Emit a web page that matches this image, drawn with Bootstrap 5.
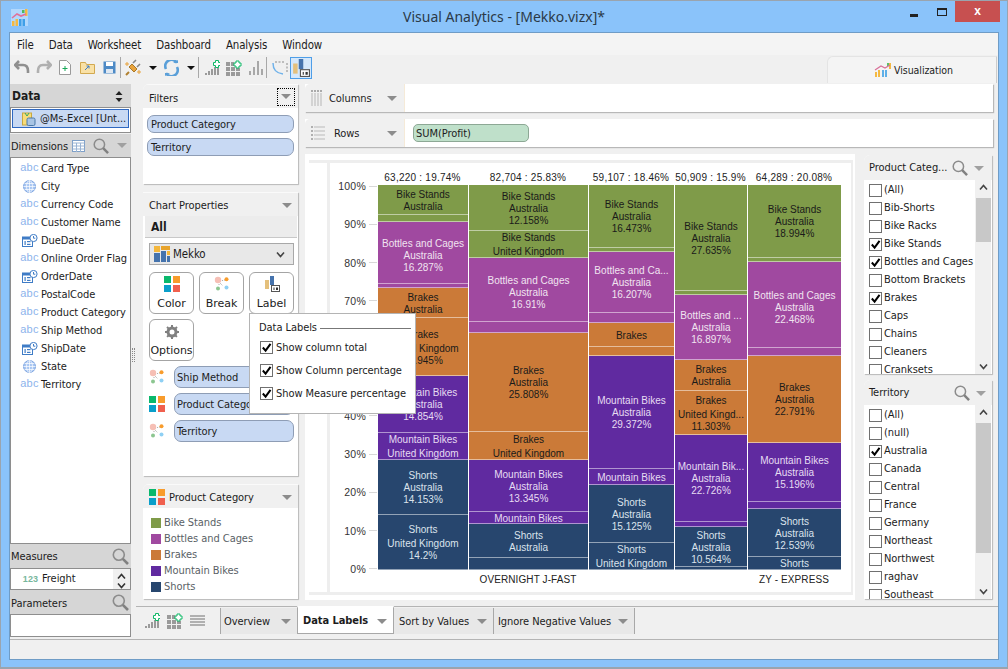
<!DOCTYPE html>
<html lang="en">
<head>
<meta charset="utf-8">
<title>Visual Analytics - [Mekko.vizx]*</title>
<link href="https://cdn.jsdelivr.net/npm/bootstrap@5.3.0/dist/css/bootstrap.min.css" rel="stylesheet">
<style>
html,body{height:669px;overflow:hidden;background:#8ac3fa}
body{font-family:"DejaVu Sans","Liberation Sans",sans-serif;font-stretch:condensed;font-size:11px;letter-spacing:-.06px;color:#1c1c1c;line-height:18px}
label,.drow,.vtab,.fhd,.lrow,.phd{white-space:nowrap}
.win{width:1008px;height:669px;border:1px solid #9aa4ae;border-bottom-width:2px}
.ttl{height:31px;flex:none}
.ttl-text{font-family:"Noto Sans",sans-serif;font-stretch:normal;font-size:14px;letter-spacing:0;color:#2b3a48;left:0;right:0;top:7px;line-height:18px}
.app-ic{margin-left:10px}
.wbtns{top:0;right:7px;height:21px}
.wb-min{width:8px;height:3px;background:#222;margin:13px 19px 0 0}
.wb-max{width:10px;height:8px;border:1px solid #222;border-top-width:2px;margin:7px 8px 0 0}
.wb-close{width:45px;height:21px;background:#c75050;color:#fff;font:bold 12px/20px "Liberation Sans",sans-serif}
.client{width:990px;height:628px;margin-left:8px;border:1px solid #6f9cc6;background:#f0f0f0;flex:none}
.menu{height:22px;background:#f4f4f4;padding-left:7px;padding-top:2px;gap:15px;flex:none;font-size:11.4px;letter-spacing:-.1px}
.tbar{height:29px;flex:none;padding-left:4px;padding-bottom:4px;background:#f0f0f0}
.tbar>*{flex-shrink:0}
.ml2{margin-left:2px}.ml3{margin-left:3px}.ml4{margin-left:4px}.ml5{margin-left:5px}.ml6{margin-left:6px}.ml7{margin-left:7px}.ml8{margin-left:8px}.ml9{margin-left:9px}
.tb-sep{width:1px;height:21px;background:#a8a8a8}
.tb-act{width:22px;height:22px;background:#d5e8fb;border:1px solid #4e9ee8}
.vz-tab{width:170px;height:27px;margin-left:auto;margin-right:1px;margin-top:1px;background:#f4f4f4;border:1px solid #e4e4e4;border-bottom:0;border-right-color:#ccc;border-top-left-radius:6px;font-size:10.5px;gap:2px;padding-left:3px}
.lcol{width:121px;flex:none;height:555px}
.hd-grey{background:#d6d6d6;padding-left:1px;padding-right:2px}
.lst{background:#fff;border:1px solid #8e8e8e}
.hd-data{height:23px;font-weight:700;font-size:12px;padding:1px 8px 0 2px}
.src{height:26px;padding:1px;background:#fff;border:1px solid #8e8e8e}
.src-in{height:19px;background:#c8d9f3;border:1px solid #2f68c0;padding-left:9px;gap:4px;width:100%;overflow:hidden}
.hd-dim{height:23px;flex:none;margin-top:1px;padding-top:2px}
.hd-dim svg,.hd-dim .tri{margin-top:-2px}
.dims{height:387px;padding-top:1px}
.drow{height:18px;padding:1px 0 0 10px;flex:none}
.ic-slot{width:17px;margin-right:3px;flex:none;display:flex;justify-content:center}
.abc{color:#8db4ec;font-family:"Liberation Sans",sans-serif;font-stretch:normal;font-size:11px;letter-spacing:.3px;line-height:14px;margin-top:-3px}
.n123{color:#78b79c;font-family:"Liberation Sans",sans-serif;font-stretch:normal;font-size:9px;font-weight:700;letter-spacing:.2px}
.hd-sm{height:24px;flex:none;padding-top:2px}
.hd-par{padding-top:3px}
.hd-sm svg{margin-top:-2px}
.meas{height:22px;position:relative;flex:none}
.meas-r{height:20px;padding-left:11px}
.sb-mini{width:17px;margin-left:auto;background:#f0f0f0;height:20px;flex-direction:column;display:flex;align-items:center;justify-content:space-between}
.par{height:23px;flex:none}
.gut{width:12px;flex:none;padding-top:20px}
.dots{width:3px;height:14px;border-left:1px dotted #888;border-right:1px dotted #888;margin-left:1px}
.mcol{width:155px;flex:none;gap:8px;height:515px}
.pbox{background:#fff;box-shadow:1px 1px 1px #b8b8b8;border-top-left-radius:6px;overflow:hidden}
.pbox-v{overflow:visible}
.phd{height:24px;background:#f0f0f0;border-top:1px solid #fafafa;padding:2px 6px 0;flex:none}
.flt{height:100px;flex:none}
.flt .phd{padding-top:4px}
.flt .phd .dotbtn{margin-top:-4px}
.flt-b{gap:5px;padding:7px 4px 0}
.dotbtn{width:18px;height:18px;border:1px dotted #000;margin-right:-3px}
.fpill{height:18px;background:#c8d9f3;border:1px solid #8e9db5;border-radius:7px;padding-left:3px;line-height:18px;white-space:nowrap;overflow:hidden}
.cp{height:284px;flex:none}
.allr{height:22px;background:#ececec;border-bottom:1px solid #c8c8c8;font-weight:700;font-size:12px;padding-left:6px;margin-left:2px;margin-right:1px}
.msel{height:22px;background:#e8e8e8;border:1px solid #a8a8a8;margin:5px 4px 0 6px;padding:0 4px;gap:3px;font-size:11.4px}
.pbtn{width:45px;height:42px;border:1px solid #a4a4a4;border-radius:6px;background:#fff;padding:3px 0 0;font-size:11px;line-height:16px;color:#1c1c1c;gap:4px;letter-spacing:-.06px}
.pbtn:hover{background:#fff;border-color:#a4a4a4;color:#1c1c1c}
.gear{margin-top:2px}
.btnrow{gap:5px;margin:7px 0 0 6px}
.btnrow2{margin-top:5px}
.prow{height:22px;margin:5px 4px 0 6px}
.prow .ic-box{width:25px;flex:none}
.prow .fpill{flex:1;height:22px;line-height:22px;padding-left:2px;min-width:0}
.leg{height:115px;flex:none}
.leg .phd{gap:4px}
.leg .phd svg{margin-top:-2px}
.leg-b{padding-top:7px}
.lrow{height:16px;padding-left:8px;color:#5a5f66;gap:3px}
.swb{width:10px;height:10px;flex:none}
.ctr{width:688px;flex:none;margin-left:7px;height:516px}
.shelf{height:28px;flex:none;background:#fff;box-shadow:1px 1px 1px #b8b8b8}
.shelf-r{margin-top:7px}
.shelf-h{width:100px;height:28px;background:#f0f0f0;border-right:1px solid #f5ead8;padding-left:6px;padding-top:2px;gap:6px;flex:none;border-top-left-radius:5px}
.shelf-h svg,.shelf-h .tri{margin-top:-2px}
.shelf-h .tri{margin-left:auto;margin-right:7px}
.rws{margin-left:3px}
.sumpill{width:116px;height:18px;margin-left:8px;background:#bfe0ca;border:1px solid #8da895;border-radius:5px;line-height:18px;padding-left:2px}
.lower{margin-top:7px}
.cvs{width:550px;height:446px;background:#fff;flex:none;padding:6px 3px 0 4px}
.frm{width:544px;height:435px;border:3px solid #eee;border-width:3px 2px 3px 0}
.frm-l{width:21px;border-right:3px solid #eee;flex:none}
.mk{font-family:"Liberation Sans",sans-serif;font-stretch:normal;font-size:10px;letter-spacing:.24px;line-height:12px;padding-top:8px}
.tots{padding:1px 0 0 47px;height:12px;margin-bottom:2px;color:#222}
.xlabs{padding-left:47px;height:12px;margin-top:4px;letter-spacing:.1px;color:#222}
.cl{flex:none;text-align:center;white-space:nowrap}
.plotw{height:385px}
.axis{width:47px;flex:none;height:385px;justify-content:space-between;color:#333;font-size:10.5px}
.tk{height:2px;flex:none;align-items:center;justify-content:flex-end}
.tk i{display:block;width:8px;height:1px;background:#d8d8d8;margin-left:3px}
.mcl{flex:none;border-left:1px solid rgba(255,255,255,.45);height:385px;letter-spacing:.02px}
.sg{overflow:hidden;border-bottom:1px solid rgba(255,255,255,.5);text-align:center;white-space:nowrap;flex:none;justify-content:center;display:flex;flex-direction:column;padding-top:2px}
.sg div{flex:none}
.sg-dn{padding-top:6px}
.uk{margin-top:2px}
.c1{background:#7f9b49;color:#1a1a1a}.c2{background:#a049a0;color:#f0e4f0}.c3{background:#cb7a38;color:#1a1a1a}.c4{background:#602aa0;color:#e6dcf2}.c5{background:#27466e;color:#dbe3ec}
.rcol{width:128px;flex:none;margin-left:9px;padding-top:1px;gap:6px}
.fbox{height:219px;flex:none;position:relative}
.fhd{height:25px;background:#f0f0f0;padding:1px 6px 0 5px;flex:none;gap:2px}
.mag-p{margin-left:3px}
.flist{height:194px;overflow:hidden;flex:1;min-width:0;padding:1px 0 0 5px}
.frow{height:18px;flex:none;gap:2px}
.form-check-input.ck{width:13px;height:13px;margin:0;border:1px solid #707070;border-radius:0;background-color:#fff;box-shadow:none;flex:none;float:none}
.form-check-input.ck:checked{background-color:#fff;border-color:#707070;background-size:11px;background-image:url("data:image/svg+xml,%3csvg xmlns='http://www.w3.org/2000/svg' viewBox='0 0 12 12'%3e%3cpath fill='none' stroke='%23000' stroke-width='2.2' d='M2 6l3 3.4L10.4 2'/%3e%3c/svg%3e")}
.vsb{width:16px;flex:none;background:#f0f0f0;height:194px;align-items:center;margin-right:1px}
.vsb-th{width:15px;background:#c8c8c8;margin-top:7px}
.vsb-tr{flex:1}
.btm{height:33px;flex:none;border-top:1px solid #b4b4b4;margin-left:5px;padding-left:8px}
.btm-ic{gap:7px;width:76px;flex:none;height:26px;margin-top:1px}
.vtab{height:26px;border-left:1px solid #a8a8a8;background:#e8e8e8;padding:1px 6px 0 3px;margin-top:1px;flex:none}
.vtab .tri{margin-left:auto}
.vtab-on{background:#fff;border:1px solid #a8a8a8;border-top:2px solid #fff;height:28px;margin-top:-1px;font-weight:700;padding-left:5px;margin-right:-1px;position:relative}
.vt-s{padding-left:5px}
.vt-i{padding-left:4px;border-right:1px solid #a8a8a8}
.status{height:20px;flex:none;border-top:1px solid #b4b4b4;background:#f0f0f0}
.tri{display:inline-block;width:0;height:0;border-left:5px solid transparent;border-right:5px solid transparent;border-top:5px solid #8c8c8c;flex:none}
.tri-k{border-left-width:4px;border-right-width:4px;border-top:4px solid #111}
.tri-l{border-top-color:#a0a0a0}
.pop{left:239px;top:229px;width:167px;height:101px;background:#fff;border:1px solid #b4b4b4;padding:5px 4px 0 9px;z-index:5;line-height:18px}
.pop-h{gap:3px;height:18px;margin-bottom:-1px}
.pop-h span{flex:none}
.pop-h i{flex:1;height:1px;background:#777;display:block}
.pop-r{height:23px;gap:3px;padding-left:1px}
</style>
</head>
<body>
<svg class="d-none" xmlns="http://www.w3.org/2000/svg">
<symbol id="s-grid" viewBox="0 0 16 16"><rect width="7" height="7" fill="#0ab86c"/><rect x="9" width="7" height="7" fill="#f89c2c"/><rect y="9" width="7" height="7" fill="#0a9fca"/><rect x="9" y="9" width="7" height="7" fill="#f0604e"/></symbol>
<symbol id="s-break" viewBox="0 0 16 16"><path d="M6 5l5-1M6 7l3 3M5 8v2" stroke="#aaa" stroke-dasharray="1 1" fill="none"/><circle cx="4" cy="4" r="3.2" fill="#f6bfb5"/><circle cx="12.5" cy="3.2" r="2" fill="#f89c2c"/><circle cx="4" cy="12.5" r="2" fill="#8cc690"/><circle cx="12.5" cy="11.5" r="2" fill="#8fd0f4"/></symbol>
<symbol id="s-label" viewBox="0 0 16 16"><rect x="1" y="4" width="4" height="9" fill="#e4c07c"/><rect x="6" y="0" width="4" height="9" fill="#4573ad"/><rect x="7.5" y="9.5" width="8" height="6" fill="#fff" stroke="#555"/><rect x="9.5" y="11.5" width="1" height="2.5" fill="#333"/><rect x="12" y="11.5" width="2" height="2.5" fill="#333"/></symbol>
<symbol id="s-mag" viewBox="0 0 17 17"><circle cx="6.8" cy="6.8" r="5.5" fill="none" stroke="#8c8c8c" stroke-width="1.6"/><path d="M10.8 10.8L16 16" stroke="#808080" stroke-width="2.6"/></symbol>
<symbol id="s-globe" viewBox="0 0 13 13"><circle cx="6.5" cy="6.5" r="6" fill="#a8c6f2" stroke="#7fa6e0"/><path d="M.5 6.5h12M1.5 3.5h10M1.5 9.5h10M6.5.5v12" stroke="#fff" stroke-width=".7"/><ellipse cx="6.5" cy="6.5" rx="3" ry="6" fill="none" stroke="#fff" stroke-width=".7"/></symbol>
<symbol id="s-date" viewBox="0 0 16 13"><rect x=".5" y="3" width="10" height="9.5" fill="#fff" stroke="#3f7cc6"/><rect x=".5" y="3" width="10" height="2.5" fill="#3f7cc6"/><rect x="2.5" y="7" width="1.2" height="4" fill="#3f7cc6"/><rect x="5" y="7" width="3.5" height="1.2" fill="#3f7cc6"/><rect x="5" y="9.8" width="3.5" height="1.2" fill="#3f7cc6"/><circle cx="11.5" cy="4" r="3.6" fill="#fff" stroke="#3f7cc6"/><path d="M11.5 2v2.2h1.8" stroke="#3f7cc6" fill="none"/></symbol>
<symbol id="s-barplus" viewBox="0 0 16 16"><path d="M1 13h2v2H1zM4 11h2v4H4zM7 9h2v6H7zM10 7h2v8h-2zM13 7h2v8h-2z" fill="#9a9a9a"/><path d="M9.5 2.5h2v-2h3v2h2v3h-2v2h-3v-2h-2z" fill="#fff" stroke="#0fb866"/></symbol>
<symbol id="s-gridplus" viewBox="0 0 16 16"><path d="M0 2h4v4H0zM5 2h3v4H5zM0 7h4v4H0zM5 7h4v4H5zM10 8h4v3h-4zM0 12h4v4H0zM5 12h4v4H5zM10 12h4v4h-4z" fill="#9a9a9a"/><path d="M8 3h2V1h3v2h2v3h-2v2h-3V6H8z" fill="#fff" stroke="#0fb866"/></symbol>
<symbol id="s-lines" viewBox="0 0 15 12"><path d="M0 1h15M0 4h15M0 7h15M0 10h15" stroke="#9a9a9a" stroke-width="1.6"/></symbol>
</svg>
<div class="win d-flex flex-column">
  <header class="ttl position-relative">
    <svg class="app-ic mt-2" width="17" height="17" viewBox="0 0 17 17"><rect width="17" height="17" fill="#fff" opacity=".35"/><rect x="1" y="12" width="2.5" height="5" fill="#f4b942"/><rect x="4.5" y="10" width="2.5" height="7" fill="#f4b942"/><rect x="8" y="10" width="2.5" height="7" fill="#3f9fe8"/><rect x="11.5" y="10" width="2.5" height="7" fill="#3f9fe8"/><rect x="11" y="1" width="2.5" height="3" fill="#4fb85e"/><rect x="14" y="0" width="2.5" height="7" fill="#f4b942"/><path d="M1 9l5-4 4 2 5-2" stroke="#e0709a" stroke-width="1.6" fill="none"/></svg>
    <div class="ttl-text position-absolute text-center">Visual Analytics - [Mekko.vizx]*</div>
    <div class="wbtns position-absolute d-flex">
      <div class="wb-min"></div><div class="wb-max"></div>
      <div class="wb-close text-center">x</div>
    </div>
  </header>
  <div class="client d-flex flex-column">
    <nav class="menu d-flex align-items-center"><span>File</span><span>Data</span><span>Worksheet</span><span>Dashboard</span><span>Analysis</span><span>Window</span></nav>
    <div class="tbar d-flex align-items-center">
      <svg width="16" height="15" viewBox="0 0 16 15"><path d="M5 1L1 5l4 4M1 5h8c4 0 5 3 5 6v2" fill="none" stroke="#8f8f8f" stroke-width="2.6"/></svg>
      <svg class="ml6" width="16" height="15" viewBox="0 0 16 15"><path d="M11 1l4 4-4 4M15 5H7C3 5 2 8 2 11v2" fill="none" stroke="#b0b0b0" stroke-width="2.6"/></svg>
      <svg class="ml7" width="12" height="15" viewBox="0 0 12 15"><path d="M.5.5h7l4 4v10H.5z" fill="#fff" stroke="#9a9a9a"/><path d="M3.5 8.5h5M6 6v5" stroke="#18a858"/></svg>
      <svg class="ml9" width="15" height="13" viewBox="0 0 15 13"><path d="M.5 1.5h5l1 2h8v9H.5z" fill="#f9e1a6" stroke="#d2a950"/><path d="M5 9l4-4M6.5 5H9v2.5" stroke="#3f7cc6" fill="none"/></svg>
      <svg class="ml8" width="13" height="13" viewBox="0 0 13 13"><path d="M.5.5h12v12H.5z" fill="#4d8ac6"/><rect x="3" y="1" width="7" height="4" fill="#fff"/><rect x="3" y="8" width="7" height="4" fill="#dfe8f2"/></svg>
      <div class="tb-sep ml4"></div>
      <svg class="ml4" width="17" height="17" viewBox="0 0 17 17"><path d="M1 16l3-3" stroke="#b08030" stroke-width="2"/><path d="M4 8l5 5 3-3-5-5z" fill="#e8a33c" stroke="#a87828"/><path d="M8 4l3-3M12 8l3-3" stroke="#888" stroke-width="1.6"/><path d="M2 3v4M0 5h4M14 11v4M12 13h4" stroke="#e8a33c"/></svg>
      <span class="tri tri-k ml7"></span>
      <svg class="ml7" width="15" height="16" viewBox="0 0 15 16"><path d="M13 3A6 6 0 0 0 2 9M2 13a6 6 0 0 0 11-6" fill="none" stroke="#5a9fd8" stroke-width="2.6"/><path d="M9 3h5V0zM6 13H1v3z" fill="#5a9fd8"/></svg>
      <span class="tri tri-k ml8"></span>
      <div class="tb-sep ml3"></div>
      <svg class="ml5" width="16" height="16"><use href="#s-barplus"/></svg>
      <svg class="ml6" width="16" height="16"><use href="#s-gridplus"/></svg>
      <svg class="ml6" width="15" height="15" viewBox="0 0 15 15"><path d="M1 11h2v4H1zM5 7h2v8H5zM9 1h2v14H9zM13 9h2v6h-2z" fill="#a8a8a8"/></svg>
      <div class="tb-sep ml3"></div>
      <svg class="ml5" width="16" height="15" viewBox="0 0 16 15"><path d="M1 3c0 7 3 10 10 11" fill="none" stroke="#6fb2ea" stroke-width="1.5"/><path d="M3 2h10M15 3v9" stroke="#8a8a8a" stroke-dasharray="2 1.5"/></svg>
      <div class="tb-act ml2 d-flex align-items-center justify-content-center"><svg width="18" height="18"><use href="#s-label"/></svg></div>
      <div class="vz-tab d-flex align-items-center justify-content-center align-self-start">
        <svg width="18" height="16" viewBox="0 0 18 16"><rect x="1" y="10" width="2" height="5" fill="#f4b942"/><rect x="4" y="8" width="2" height="7" fill="#f4b942"/><rect x="8" y="8" width="2" height="7" fill="#5fb0e8"/><rect x="11" y="8" width="2" height="7" fill="#5fb0e8"/><rect x="13" y="1" width="2" height="3" fill="#5bbf6a"/><rect x="15" y="1" width="2" height="6" fill="#f4b942"/><path d="M1 8l6-4 4 2 5-3" stroke="#d87098" fill="none" stroke-width="1.2"/></svg>
        <span>Visualization</span>
      </div>
    </div>
    <div class="d-flex flex-grow-1 position-relative">
      <aside class="lcol d-flex flex-column">
        <div class="hd-grey hd-data d-flex align-items-center justify-content-between"><span>Data</span><svg width="8" height="11" viewBox="0 0 8 11"><path d="M4 0l3.5 4h-7zM4 11L.5 7h7z" fill="#222"/></svg></div>
        <div class="src d-flex"><div class="src-in d-flex align-items-center">
          <svg width="14" height="14" viewBox="0 0 14 14" class="flex-shrink-0"><rect x=".5" y="1" width="9" height="12" fill="#f8dc78" stroke="#c8a840"/><rect x="5" y="6" width="8" height="7.5" rx="1.5" fill="#a8c4e4" stroke="#4a78a8"/><path d="M3 1l2 3 2-3" stroke="#3a6" fill="none"/></svg>
          <span class="text-nowrap">@Ms-Excel [Unt...</span></div></div>
        <div class="hd-grey hd-dim d-flex align-items-center"><span>Dimensions</span>
          <svg width="13" height="12" viewBox="0 0 13 12" class="flex-shrink-0 ms-1"><rect x=".5" y=".5" width="12" height="11" fill="#fff" stroke="#7fa0c8"/><path d="M.5 3h12M.5 6h12M.5 9h12M4.5 3v9M8.5 3v9" stroke="#9ab4d4"/></svg>
          <svg width="16" height="16" class="flex-shrink-0 ms-2"><use href="#s-mag"/></svg>
          <span class="tri tri-l ms-2"></span></div>
        <div class="lst dims d-flex flex-column">
          <div class="drow d-flex align-items-center"><span class="ic-slot"><span class="abc">abc</span></span>Card Type</div>
          <div class="drow d-flex align-items-center"><span class="ic-slot"><svg width="13" height="13"><use href="#s-globe"/></svg></span>City</div>
          <div class="drow d-flex align-items-center"><span class="ic-slot"><span class="abc">abc</span></span>Currency Code</div>
          <div class="drow d-flex align-items-center"><span class="ic-slot"><span class="abc">abc</span></span>Customer Name</div>
          <div class="drow d-flex align-items-center"><span class="ic-slot"><svg width="16" height="13"><use href="#s-date"/></svg></span>DueDate</div>
          <div class="drow d-flex align-items-center"><span class="ic-slot"><span class="abc">abc</span></span>Online Order Flag</div>
          <div class="drow d-flex align-items-center"><span class="ic-slot"><svg width="16" height="13"><use href="#s-date"/></svg></span>OrderDate</div>
          <div class="drow d-flex align-items-center"><span class="ic-slot"><span class="abc">abc</span></span>PostalCode</div>
          <div class="drow d-flex align-items-center"><span class="ic-slot"><span class="abc">abc</span></span>Product Category</div>
          <div class="drow d-flex align-items-center"><span class="ic-slot"><span class="abc">abc</span></span>Ship Method</div>
          <div class="drow d-flex align-items-center"><span class="ic-slot"><svg width="16" height="13"><use href="#s-date"/></svg></span>ShipDate</div>
          <div class="drow d-flex align-items-center"><span class="ic-slot"><svg width="13" height="13"><use href="#s-globe"/></svg></span>State</div>
          <div class="drow d-flex align-items-center"><span class="ic-slot"><span class="abc">abc</span></span>Territory</div>
        </div>
        <div class="hd-grey hd-sm d-flex align-items-center justify-content-between"><span>Measures</span><svg width="17" height="17"><use href="#s-mag"/></svg></div>
        <div class="lst meas d-flex align-items-start">
          <div class="meas-r d-flex align-items-center"><span class="ic-slot"><span class="n123">123</span></span>Freight</div>
          <div class="sb-mini"><svg width="9" height="7" viewBox="0 0 9 7" class="mt-1"><path d="M1 5.5l3.5-4 3.5 4" fill="none" stroke="#333" stroke-width="1.6"/></svg><svg width="9" height="7" viewBox="0 0 9 7"><path d="M1 1.5l3.5 4 3.5-4" fill="none" stroke="#333" stroke-width="1.6"/></svg></div>
        </div>
        <div class="hd-grey hd-sm hd-par d-flex align-items-center justify-content-between"><span>Parameters</span><svg width="17" height="17"><use href="#s-mag"/></svg></div>
        <div class="lst par"></div>
      </aside>
      <div class="d-flex flex-column flex-grow-1" style="min-width:0">
        <div class="d-flex" style="height:522px">
          <div class="gut d-flex align-items-center"><span class="dots"></span></div>
          <div class="mcol d-flex flex-column">
            <section class="pbox flt d-flex flex-column">
              <div class="phd d-flex align-items-center justify-content-between"><span>Filters</span><span class="dotbtn d-flex align-items-center justify-content-center"><span class="tri"></span></span></div>
              <div class="flt-b d-flex flex-column">
                <div class="fpill">Product Category</div>
                <div class="fpill">Territory</div>
              </div>
            </section>
            <section class="pbox pbox-v cp d-flex flex-column">
              <div class="phd d-flex align-items-center justify-content-between"><span>Chart Properties</span><span class="tri"></span></div>
              <div class="allr d-flex align-items-center">All</div>
              <div class="msel d-flex align-items-center">
                <svg width="16" height="16" viewBox="0 0 16 16"><rect width="6" height="6" fill="#f4b73c"/><rect x="7" width="9" height="4" fill="#e8a42c"/><rect y="7" width="6" height="9" fill="#4573ad"/><rect x="7" y="5" width="5" height="11" fill="#4573ad"/><rect x="13" y="5" width="3" height="4" fill="#f4b73c"/><rect x="13" y="10" width="3" height="6" fill="#4573ad"/></svg>
                <span>Mekko</span>
                <svg class="ms-auto me-1" width="9" height="7" viewBox="0 0 9 7"><path d="M1 1.5l3.5 4 3.5-4" fill="none" stroke="#444" stroke-width="1.6"/></svg>
              </div>
              <div class="btnrow d-flex">
                <button class="btn pbtn d-flex flex-column align-items-center"><svg width="16" height="16"><use href="#s-grid"/></svg>Color</button>
                <button class="btn pbtn d-flex flex-column align-items-center"><svg width="16" height="16"><use href="#s-break"/></svg>Break</button>
                <button class="btn pbtn d-flex flex-column align-items-center"><svg width="16" height="16"><use href="#s-label"/></svg>Label</button>
              </div>
              <div class="btnrow btnrow2 d-flex">
                <button class="btn pbtn d-flex flex-column align-items-center"><svg class="gear" width="14" height="14" viewBox="0 0 14 14"><circle cx="7" cy="7" r="4" fill="none" stroke="#808080" stroke-width="3"/><path d="M7 0v14M0 7h14M2 2l10 10M12 2L2 12" stroke="#808080" stroke-width="2" stroke-dasharray="2 10"/></svg>Options</button>
              </div>
              <div class="prow d-flex align-items-center"><span class="ic-box"><svg width="16" height="16" class="d-block"><use href="#s-break"/></svg></span><div class="fpill">Ship Method</div></div>
              <div class="prow d-flex align-items-center"><span class="ic-box"><svg width="16" height="16" class="d-block"><use href="#s-grid"/></svg></span><div class="fpill">Product Category</div></div>
              <div class="prow d-flex align-items-center"><span class="ic-box"><svg width="16" height="16" class="d-block"><use href="#s-break"/></svg></span><div class="fpill">Territory</div></div>
            </section>
            <section class="pbox leg d-flex flex-column">
              <div class="phd d-flex align-items-center"><svg width="16" height="16"><use href="#s-grid"/></svg><span>Product Category</span><span class="tri ms-auto"></span></div>
              <div class="leg-b">
                <div class="lrow d-flex align-items-center"><span class="swb c1"></span>Bike Stands</div>
                <div class="lrow d-flex align-items-center"><span class="swb c2"></span>Bottles and Cages</div>
                <div class="lrow d-flex align-items-center"><span class="swb c3"></span>Brakes</div>
                <div class="lrow d-flex align-items-center"><span class="swb c4"></span>Mountain Bikes</div>
                <div class="lrow d-flex align-items-center"><span class="swb c5"></span>Shorts</div>
              </div>
            </section>
          </div>
          <main class="ctr d-flex flex-column">
            <div class="shelf d-flex align-items-center"><div class="shelf-h d-flex align-items-center">
              <svg width="12" height="16" viewBox="0 0 12 16"><path d="M1 0v2M4 0v2M7 0v2M10 0v2" stroke="#999" stroke-width="1.6"/><path d="M1 3v13M4 3v13M7 3v13M10 3v13" stroke="#ccc" stroke-width="1.6"/></svg>
              <span>Columns</span><span class="tri"></span></div></div>
            <div class="shelf shelf-r d-flex align-items-center"><div class="shelf-h d-flex align-items-center">
              <svg width="14" height="14" viewBox="0 0 14 14"><path d="M0 1h2M0 5h2M0 9h2M0 13h2" stroke="#999" stroke-width="1.6"/><path d="M3 1h11M3 5h11M3 9h11M3 13h11" stroke="#ccc" stroke-width="1.6"/></svg>
              <span class="rws">Rows</span><span class="tri"></span></div><div class="sumpill">SUM(Profit)</div></div>
            <div class="lower d-flex">
              <div class="cvs"><div class="frm d-flex">
                <div class="frm-l"></div>
                <div class="mk flex-grow-1">
                  <div class="tots d-flex">
                    <div class="cl" style="width:91px">63,220 : 19.74%</div><div class="cl" style="width:120px">82,704 : 25.83%</div><div class="cl" style="width:86px">59,107 : 18.46%</div><div class="cl" style="width:73px">50,909 : 15.9%</div><div class="cl" style="width:94px">64,289 : 20.08%</div>
                  </div>
                  <div class="plotw d-flex">
                    <div class="axis d-flex flex-column">
                      <div class="tk d-flex">100%<i></i></div><div class="tk d-flex">90%<i></i></div><div class="tk d-flex">80%<i></i></div><div class="tk d-flex">70%<i></i></div><div class="tk d-flex">60%<i></i></div><div class="tk d-flex">50%<i></i></div><div class="tk d-flex">40%<i></i></div><div class="tk d-flex">30%<i></i></div><div class="tk d-flex">20%<i></i></div><div class="tk d-flex">10%<i></i></div><div class="tk d-flex">0%<i></i></div>
                    </div>
                    <div class="mcl d-flex flex-column" style="width:91px">
                      <div class="sg c1" style="height:30px"><div>Bike Stands</div><div>Australia</div></div>
                      <div class="sg c1" style="height:7px"></div>
                      <div class="sg sg-dn c2" style="height:62px"><div>Bottles and Cages</div><div>Australia</div><div>16.287%</div></div>
                      <div class="sg c2" style="height:4px"></div>
                      <div class="sg c3" style="height:30px"><div>Brakes</div><div>Australia</div></div>
                      <div class="sg c3" style="height:58px"><div>Brakes</div><div class="uk">United Kingdom</div><div>14.945%</div></div>
                      <div class="sg c4" style="height:57px"><div>Mountain Bikes</div><div>Australia</div><div>14.854%</div></div>
                      <div class="sg c4" style="height:27px"><div>Mountain Bikes</div><div class="uk">United Kingdom</div></div>
                      <div class="sg c5" style="height:55px"><div>Shorts</div><div>Australia</div><div>14.153%</div></div>
                      <div class="sg c5" style="height:55px"><div>Shorts</div><div class="uk">United Kingdom</div><div>14.2%</div></div>
                    </div>
                    <div class="mcl d-flex flex-column" style="width:120px">
                      <div class="sg c1" style="height:46px"><div>Bike Stands</div><div>Australia</div><div>12.158%</div></div>
                      <div class="sg c1" style="height:27px"><div>Bike Stands</div><div class="uk">United Kingdom</div></div>
                      <div class="sg sg-dn c2" style="height:64px"><div>Bottles and Cages</div><div>Australia</div><div>16.91%</div></div>
                      <div class="sg c2" style="height:11px"></div>
                      <div class="sg c3" style="height:99px"><div>Brakes</div><div>Australia</div><div>25.808%</div></div>
                      <div class="sg c3" style="height:28px"><div>Brakes</div><div class="uk">United Kingdom</div></div>
                      <div class="sg c4" style="height:52px"><div>Mountain Bikes</div><div>Australia</div><div>13.345%</div></div>
                      <div class="sg c4" style="height:12px"><div>Mountain Bikes</div></div>
                      <div class="sg c5" style="height:34px"><div>Shorts</div><div>Australia</div></div>
                      <div class="sg c5" style="height:12px"></div>
                    </div>
                    <div class="mcl d-flex flex-column" style="width:86px">
                      <div class="sg c1" style="height:63px"><div>Bike Stands</div><div>Australia</div><div>16.473%</div></div>
                      <div class="sg c1" style="height:4px"></div>
                      <div class="sg c2" style="height:61px"><div>Bottles and Ca...</div><div>Australia</div><div>16.207%</div></div>
                      <div class="sg c2" style="height:10px"></div>
                      <div class="sg c3" style="height:24px"><div>Brakes</div></div>
                      <div class="sg c3" style="height:9px"></div>
                      <div class="sg c4" style="height:113px"><div>Mountain Bikes</div><div>Australia</div><div>29.372%</div></div>
                      <div class="sg c4" style="height:16px"><div>Mountain Bikes</div></div>
                      <div class="sg c5" style="height:58px"><div>Shorts</div><div>Australia</div><div>15.125%</div></div>
                      <div class="sg c5" style="height:27px"><div>Shorts</div><div class="uk">United Kingdom</div></div>
                    </div>
                    <div class="mcl d-flex flex-column" style="width:73px">
                      <div class="sg c1" style="height:106px"><div>Bike Stands</div><div>Australia</div><div>27.635%</div></div>
                      <div class="sg c1" style="height:4px"></div>
                      <div class="sg c2" style="height:65px"><div>Bottles and ...</div><div>Australia</div><div>16.897%</div></div>
                      <div class="sg c3" style="height:31px"><div>Brakes</div><div>Australia</div></div>
                      <div class="sg c3" style="height:44px"><div>Brakes</div><div class="uk">United Kingd...</div><div>11.303%</div></div>
                      <div class="sg c4" style="height:87px"><div>Mountain Bik...</div><div>Australia</div><div>22.726%</div></div>
                      <div class="sg c4" style="height:5px"></div>
                      <div class="sg c5" style="height:40px"><div>Shorts</div><div>Australia</div><div>10.564%</div></div>
                      <div class="sg c5" style="height:3px"></div>
                    </div>
                    <div class="mcl d-flex flex-column" style="width:94px">
                      <div class="sg c1" style="height:73px"><div>Bike Stands</div><div>Australia</div><div>18.994%</div></div>
                      <div class="sg c1" style="height:4px"></div>
                      <div class="sg sg-dn c2" style="height:86px"><div>Bottles and Cages</div><div>Australia</div><div>22.468%</div></div>
                      <div class="sg c2" style="height:8px"></div>
                      <div class="sg c3" style="height:87px"><div>Brakes</div><div>Australia</div><div>22.791%</div></div>
                      <div class="sg c4" style="height:59px"><div>Mountain Bikes</div><div>Australia</div><div>15.196%</div></div>
                      <div class="sg c4" style="height:7px"></div>
                      <div class="sg c5" style="height:48px"><div>Shorts</div><div>Australia</div><div>12.539%</div></div>
                      <div class="sg c5" style="height:13px"><div>Shorts</div></div>
                    </div>
                  </div>
                  <div class="xlabs d-flex">
                    <div class="cl" style="width:91px"></div><div class="cl" style="width:120px">OVERNIGHT J-FAST</div><div class="cl" style="width:86px"></div><div class="cl" style="width:73px"></div><div class="cl" style="width:94px">ZY - EXPRESS</div>
                  </div>
                </div>
              </div></div>
              <div class="rcol d-flex flex-column">
                <section class="pbox fbox d-flex flex-column">
                  <div class="fhd d-flex align-items-center"><span>Product Categ...</span><svg class="flex-shrink-0 mag-p" width="16" height="16"><use href="#s-mag"/></svg><span class="tri tri-l ms-1"></span></div>
                  <div class="d-flex">
                    <div class="flist d-flex flex-column">
                      <label class="frow d-flex align-items-center"><input class="form-check-input ck" type="checkbox">(All)</label>
                      <label class="frow d-flex align-items-center"><input class="form-check-input ck" type="checkbox">Bib-Shorts</label>
                      <label class="frow d-flex align-items-center"><input class="form-check-input ck" type="checkbox">Bike Racks</label>
                      <label class="frow d-flex align-items-center"><input class="form-check-input ck" type="checkbox" checked>Bike Stands</label>
                      <label class="frow d-flex align-items-center"><input class="form-check-input ck" type="checkbox" checked>Bottles and Cages</label>
                      <label class="frow d-flex align-items-center"><input class="form-check-input ck" type="checkbox">Bottom Brackets</label>
                      <label class="frow d-flex align-items-center"><input class="form-check-input ck" type="checkbox" checked>Brakes</label>
                      <label class="frow d-flex align-items-center"><input class="form-check-input ck" type="checkbox">Caps</label>
                      <label class="frow d-flex align-items-center"><input class="form-check-input ck" type="checkbox">Chains</label>
                      <label class="frow d-flex align-items-center"><input class="form-check-input ck" type="checkbox">Cleaners</label>
                      <label class="frow d-flex align-items-center"><input class="form-check-input ck" type="checkbox">Cranksets</label>
                    </div>
                    <div class="vsb d-flex flex-column">
                      <svg width="9" height="7" viewBox="0 0 9 7" class="mt-1 flex-shrink-0"><path d="M1 5.5l3.5-4 3.5 4" fill="none" stroke="#444" stroke-width="1.6"/></svg>
                      <div class="vsb-th" style="height:44px"></div><div class="vsb-tr"></div>
                      <svg width="9" height="7" viewBox="0 0 9 7" class="mb-1 flex-shrink-0"><path d="M1 1.5l3.5 4 3.5-4" fill="none" stroke="#444" stroke-width="1.6"/></svg>
                    </div>
                  </div>
                </section>
                <section class="pbox fbox d-flex flex-column">
                  <div class="fhd d-flex align-items-center"><span>Territory</span><svg class="flex-shrink-0 ms-auto" width="16" height="16"><use href="#s-mag"/></svg><span class="tri tri-l ms-1"></span></div>
                  <div class="d-flex">
                    <div class="flist d-flex flex-column">
                      <label class="frow d-flex align-items-center"><input class="form-check-input ck" type="checkbox">(All)</label>
                      <label class="frow d-flex align-items-center"><input class="form-check-input ck" type="checkbox">(null)</label>
                      <label class="frow d-flex align-items-center"><input class="form-check-input ck" type="checkbox" checked>Australia</label>
                      <label class="frow d-flex align-items-center"><input class="form-check-input ck" type="checkbox">Canada</label>
                      <label class="frow d-flex align-items-center"><input class="form-check-input ck" type="checkbox">Central</label>
                      <label class="frow d-flex align-items-center"><input class="form-check-input ck" type="checkbox">France</label>
                      <label class="frow d-flex align-items-center"><input class="form-check-input ck" type="checkbox">Germany</label>
                      <label class="frow d-flex align-items-center"><input class="form-check-input ck" type="checkbox">Northeast</label>
                      <label class="frow d-flex align-items-center"><input class="form-check-input ck" type="checkbox">Northwest</label>
                      <label class="frow d-flex align-items-center"><input class="form-check-input ck" type="checkbox">raghav</label>
                      <label class="frow d-flex align-items-center"><input class="form-check-input ck" type="checkbox">Southeast</label>
                    </div>
                    <div class="vsb d-flex flex-column">
                      <svg width="9" height="7" viewBox="0 0 9 7" class="mt-1 flex-shrink-0"><path d="M1 5.5l3.5-4 3.5 4" fill="none" stroke="#444" stroke-width="1.6"/></svg>
                      <div class="vsb-th" style="height:130px"></div><div class="vsb-tr"></div>
                      <svg width="9" height="7" viewBox="0 0 9 7" class="mb-1 flex-shrink-0"><path d="M1 1.5l3.5 4 3.5-4" fill="none" stroke="#444" stroke-width="1.6"/></svg>
                    </div>
                  </div>
                </section>
              </div>
            </div>
          </main>
        </div>
        <div class="btm d-flex align-items-start">
          <div class="btm-ic d-flex align-items-center"><svg width="16" height="16"><use href="#s-barplus"/></svg><svg width="16" height="16"><use href="#s-gridplus"/></svg><svg width="15" height="12"><use href="#s-lines"/></svg></div>
          <div class="vtab d-flex align-items-center" style="width:77px">Overview<span class="tri"></span></div>
          <div class="vtab vtab-on d-flex align-items-center" style="width:97px">Data Labels<span class="tri"></span></div>
          <div class="vtab vt-s d-flex align-items-center" style="width:100px">Sort by Values<span class="tri"></span></div>
          <div class="vtab vt-i d-flex align-items-center" style="width:142px">Ignore Negative Values<span class="tri"></span></div>
        </div>
      </div>
      <div class="pop position-absolute">
        <div class="pop-h d-flex align-items-center"><span>Data Labels</span><i></i></div>
        <label class="pop-r d-flex align-items-center"><input class="form-check-input ck" type="checkbox" checked>Show column total</label>
        <label class="pop-r d-flex align-items-center"><input class="form-check-input ck" type="checkbox" checked>Show Column percentage</label>
        <label class="pop-r d-flex align-items-center"><input class="form-check-input ck" type="checkbox" checked>Show Measure percentage</label>
      </div>
    </div>
    <div class="status"></div>
  </div>
</div>
</body>
</html>
